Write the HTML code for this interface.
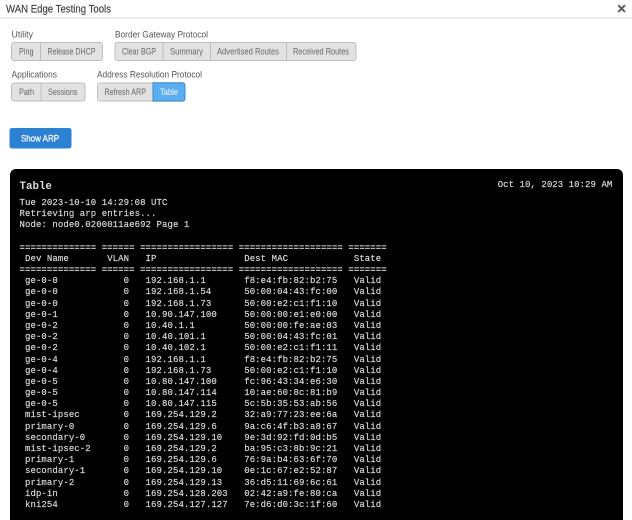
<!DOCTYPE html>
<html><head><meta charset="utf-8"><style>
html,body{margin:0;padding:0;background:#fff;width:632px;height:520px;overflow:hidden}
#ui{position:absolute;left:0;top:0}
#ui text{font-family:"Liberation Sans",sans-serif;font-size:9.3px}
.b{fill:#e2e2e2;stroke:#bdbdbd;stroke-width:1}
.d{stroke:#bdbdbd;stroke-width:1}
.t{fill:#666;filter:blur(.2px)}
.l{fill:#555}
#panel{position:absolute;left:9.5px;top:169px;width:613.5px;height:351px;background:#000;border-radius:6px 6px 0 0}
pre{position:absolute;margin:0;font-family:"Liberation Mono",monospace;font-size:9px;letter-spacing:.08px;color:#dcdcdc;line-height:11.18px;filter:blur(.25px);font-weight:400;-webkit-text-stroke:.15px #dcdcdc}
</style></head><body>
<svg id="ui" width="632" height="170" viewBox="0 0 632 170">
<rect x="0" y="17.5" width="632" height="1.2" fill="#e4e4e4"/>
<text x="6" y="12.5" textLength="105" lengthAdjust="spacingAndGlyphs" style="font-size:11.3px;fill:#3d3d3d;stroke:#3d3d3d;stroke-width:.15">WAN Edge Testing Tools</text>
<path d="M618.3 5.2L625 11.9M625 5.2L618.3 11.9" stroke="#5a5a5a" stroke-width="1.9" fill="none"/>

<text class="l" x="11.5" y="37.5" textLength="21.5" lengthAdjust="spacingAndGlyphs">Utility</text>
<text class="l" x="115" y="37.5" textLength="93" lengthAdjust="spacingAndGlyphs">Border Gateway Protocol</text>
<text class="l" x="11.5" y="77.5" textLength="45.5" lengthAdjust="spacingAndGlyphs">Applications</text>
<text class="l" x="97" y="77.5" textLength="105" lengthAdjust="spacingAndGlyphs">Address Resolution Protocol</text>

<rect class="b" x="11.5" y="42.5" width="91" height="18" rx="2.5"/>
<line class="d" x1="40.5" y1="43" x2="40.5" y2="60"/>
<text class="t" x="19" y="54.5" textLength="14.5" lengthAdjust="spacingAndGlyphs">Ping</text>
<text class="t" x="47.5" y="54.5" textLength="48" lengthAdjust="spacingAndGlyphs">Release DHCP</text>

<rect class="b" x="115" y="42.5" width="241" height="18" rx="2.5"/>
<line class="d" x1="163" y1="43" x2="163" y2="60"/>
<line class="d" x1="210.5" y1="43" x2="210.5" y2="60"/>
<line class="d" x1="286.5" y1="43" x2="286.5" y2="60"/>
<text class="t" x="122" y="54.5" textLength="34" lengthAdjust="spacingAndGlyphs">Clear BGP</text>
<text class="t" x="170" y="54.5" textLength="33" lengthAdjust="spacingAndGlyphs">Summary</text>
<text class="t" x="217" y="54.5" textLength="62" lengthAdjust="spacingAndGlyphs">Advertised Routes</text>
<text class="t" x="293" y="54.5" textLength="56" lengthAdjust="spacingAndGlyphs">Received Routes</text>

<rect class="b" x="11.5" y="83" width="73.5" height="18" rx="2.5"/>
<line class="d" x1="41" y1="83.5" x2="41" y2="100.5"/>
<text class="t" x="19" y="95" textLength="15" lengthAdjust="spacingAndGlyphs">Path</text>
<text class="t" x="48" y="95" textLength="29.5" lengthAdjust="spacingAndGlyphs">Sessions</text>

<rect class="b" x="97.5" y="83" width="87.5" height="18" rx="2.5"/>
<text class="t" x="104.5" y="95" textLength="41.5" lengthAdjust="spacingAndGlyphs">Refresh ARP</text>
<path d="M153 82.7H182.5a2.5 2.5 0 0 1 2.5 2.5V98.6a2.5 2.5 0 0 1 -2.5 2.5H153Z" fill="#5aaef0" stroke="#3a86c8" stroke-width="1"/>
<text x="160" y="95" textLength="18" lengthAdjust="spacingAndGlyphs" fill="#f2f8fe">Table</text>

<rect x="9.5" y="128" width="62" height="20.5" rx="2.5" fill="#2d81d2"/>
<text x="21" y="141.5" textLength="38" lengthAdjust="spacingAndGlyphs" fill="#fff" stroke="#fff" stroke-width=".25">Show ARP</text>
</svg>
<div id="panel"></div>
<pre style="left:19.5px;top:181px;font-size:10.8px;font-weight:700;line-height:12px;letter-spacing:0;-webkit-text-stroke:0;color:#ddd">Table</pre>
<pre style="left:497.7px;top:179.8px;letter-spacing:.06px">Oct 10, 2023 10:29 AM</pre>
<pre style="left:19.5px;top:197.9px">Tue 2023-10-10 14:29:08 UTC
Retrieving arp entries...
Node: node0.0200011ae692 Page 1

============== ====== ================= =================== =======
 Dev Name       VLAN   IP                Dest MAC            State
============== ====== ================= =================== =======
 ge-0-0            0   192.168.1.1       f8:e4:fb:82:b2:75   Valid
 ge-0-0            0   192.168.1.54      50:00:04:43:fc:00   Valid
 ge-0-0            0   192.168.1.73      50:00:e2:c1:f1:10   Valid
 ge-0-1            0   10.90.147.100     50:00:00:e1:e0:00   Valid
 ge-0-2            0   10.40.1.1         50:00:00:fe:ae:03   Valid
 ge-0-2            0   10.40.101.1       50:00:04:43:fc:01   Valid
 ge-0-2            0   10.40.102.1       50:00:e2:c1:f1:11   Valid
 ge-0-4            0   192.168.1.1       f8:e4:fb:82:b2:75   Valid
 ge-0-4            0   192.168.1.73      50:00:e2:c1:f1:10   Valid
 ge-0-5            0   10.80.147.100     fc:96:43:34:e6:30   Valid
 ge-0-5            0   10.80.147.114     10:ae:60:8c:81:b9   Valid
 ge-0-5            0   10.80.147.115     5c:5b:35:53:ab:56   Valid
 mist-ipsec        0   169.254.129.2     32:a9:77:23:ee:6a   Valid
 primary-0         0   169.254.129.6     9a:c6:4f:b3:a8:67   Valid
 secondary-0       0   169.254.129.10    9e:3d:92:fd:0d:b5   Valid
 mist-ipsec-2      0   169.254.129.2     ba:95:c3:8b:9c:21   Valid
 primary-1         0   169.254.129.6     76:9a:b4:63:6f:70   Valid
 secondary-1       0   169.254.129.10    0e:1c:67:e2:52:87   Valid
 primary-2         0   169.254.129.13    36:d5:11:69:6c:61   Valid
 idp-in            0   169.254.128.203   02:42:a9:fe:80:ca   Valid
 kni254            0   169.254.127.127   7e:d6:d0:3c:1f:60   Valid</pre>
</body></html>
